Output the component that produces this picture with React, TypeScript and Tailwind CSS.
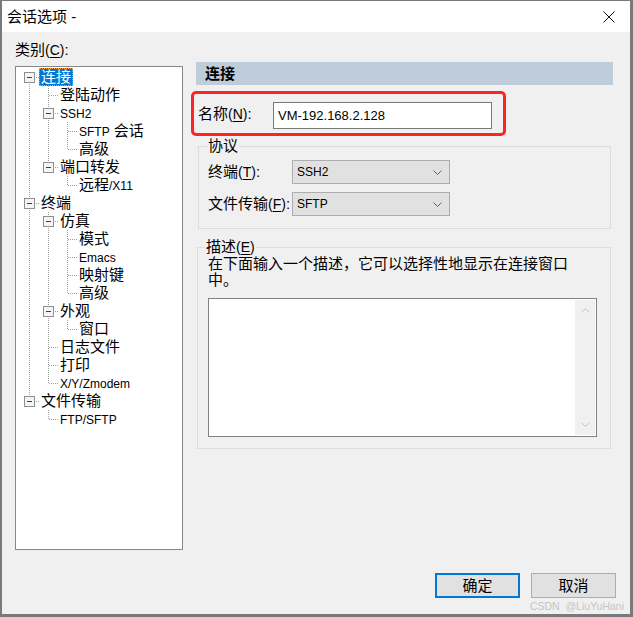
import React from 'react'

type TreeNode = {
  label: React.ReactNode
  selected?: boolean
  children?: TreeNode[]
}

type Row = {
  node: TreeNode
  level: number
  cont: boolean[]
  isLast: boolean
  isFirstRoot: boolean
}

// latin runs are smaller than the CJK text in this dialog
const L = (s: string) => <span className="text-[12px]">{s}</span>

const tree: TreeNode[] = [
  {
    label: '连接',
    selected: true,
    children: [
      { label: '登陆动作' },
      { label: L('SSH2'), children: [{ label: <>{L('SFTP')} 会话</> }, { label: '高级' }] },
      { label: '端口转发', children: [{ label: <>远程{L('/X11')}</> }] },
    ],
  },
  {
    label: '终端',
    children: [
      {
        label: '仿真',
        children: [{ label: '模式' }, { label: L('Emacs') }, { label: '映射键' }, { label: '高级' }],
      },
      { label: '外观', children: [{ label: '窗口' }] },
      { label: '日志文件' },
      { label: '打印' },
      { label: L('X/Y/Zmodem') },
    ],
  },
  { label: '文件传输', children: [{ label: L('FTP/SFTP') }] },
]

const flatten = (nodes: TreeNode[], level: number, cont: boolean[], out: Row[]) => {
  nodes.forEach((node, i) => {
    const isLast = i === nodes.length - 1
    out.push({ node, level, cont, isLast, isFirstRoot: level === 0 && i === 0 })
    if (node.children) flatten(node.children, level + 1, [...cont, !isLast], out)
  })
  return out
}

const rows = flatten(tree, 0, [], [])

const dotted = { stroke: '#a0a0a0', strokeDasharray: '1 1', strokeWidth: 1 }

function Cell({ row, own, on }: { row?: Row; own?: boolean; on?: boolean }) {
  if (!own) {
    return (
      <svg width="19" height="18" className="shrink-0">
        {on && <line x1="9.5" y1="0" x2="9.5" y2="18" style={dotted} />}
      </svg>
    )
  }
  const r = row!
  const y0 = r.isFirstRoot ? 10 : 0
  const y1 = r.isLast ? 9 : 18
  return (
    <svg width="19" height="18" className="shrink-0">
      {y1 > y0 && <line x1="9.5" y1={y0} x2="9.5" y2={y1} style={dotted} />}
      <line x1="10" y1="9.5" x2="19" y2="9.5" style={dotted} />
      {r.node.children && (
        <>
          <rect x="4.5" y="4.5" width="10" height="10" fill="#f4f4f4" stroke="#8e8f8f" />
          <line x1="7" y1="9.5" x2="12" y2="9.5" stroke="#1e3d8f" strokeWidth="1" />
        </>
      )}
    </svg>
  )
}

function Tree() {
  return (
    <div className="mt-[7px] w-[168px] h-[484px] border border-[#828790] bg-white pt-[1px] pl-[4px]">
      {rows.map((row, i) => (
        <div key={i} className="flex h-[18px] items-center">
          {row.cont.map((c, k) => (
            <Cell key={k} on={c} />
          ))}
          <Cell row={row} own />
          <span
            className={`px-[2px] h-[18px] leading-[18px] whitespace-nowrap ${
              row.node.selected
                ? 'bg-[#0078d7] text-white outline-1 outline-dotted outline-[#ff9a3c] -outline-offset-1'
                : 'text-black'
            }`}
          >
            {row.node.label}
          </span>
        </div>
      ))}
    </div>
  )
}

const Key = ({ k }: { k: string }) => (
  <span className="text-[14px]">
    (<span className="underline underline-offset-2">{k}</span>)
  </span>
)

function Select({ value }: { value: string }) {
  return (
    <div className="w-[158px] h-[24px] border border-[#adadad] bg-[#e1e1e1] flex items-center justify-between pl-[4px] pr-[7px]">
      <span className="text-[12px] leading-[22px]">{value}</span>
      <svg width="9" height="5">
        <polyline points="0.5,0.5 4.5,4.5 8.5,0.5" fill="none" stroke="#606060" strokeWidth="1" />
      </svg>
    </div>
  )
}

export default function App() {
  return (
    <div className="w-[633px] h-[617px] flex flex-col border-t border-l-2 border-r-[3px] border-b-[3px] border-[#7a7a7a] bg-[#f0f0f0] text-black text-[15px] font-['Liberation_Sans','Noto_Sans_CJK_SC',sans-serif] relative overflow-hidden">
      {/* title bar */}
      <div className="h-[31px] shrink-0 bg-white flex items-center justify-between pl-[5px] pr-[15px]">
        <span className="leading-[20px]">会话选项 -</span>
        <svg width="12" height="12" viewBox="0 0 12 12">
          <path d="M0.5 0.5 L11.5 11.5 M11.5 0.5 L0.5 11.5" stroke="#111" strokeWidth="1" />
        </svg>
      </div>

      <div className="flex-1 flex flex-col">
        <div className="flex">
          {/* category tree */}
          <div className="pl-[13px] pt-[9px] w-[181px] shrink-0">
            <div className="leading-[18px]">
              类别<Key k="C" />:
            </div>
            <Tree />
          </div>

          {/* settings */}
          <div className="pt-[30px] flex flex-col">
            <div className="ml-[13px] w-[417px] h-[23px] bg-[#bfcddb] pl-[9px] font-bold leading-[23px]">连接</div>

            <div className="ml-[8px] mt-[6px] w-[315px] h-[45px] border-[3px] border-[#ff2424] rounded-[5px] flex items-center pl-[4px] pt-[3px]">
              <span className="w-[75px] leading-[18px] -mt-[3px]">
                名称<Key k="N" />:
              </span>
              <div className="w-[219px] h-[27px] border border-[#7a7a7a] bg-white pl-[4px] text-[13px] leading-[25px]">
                VM-192.168.2.128
              </div>
            </div>

            <fieldset className="ml-[15px] mt-[1px] w-[413px] border border-[#dcdcdc] pl-[9px] pb-[12px]">
              <legend className="ml-[-1px] px-[1px] leading-[18px]">协议</legend>
              <div className="mt-[5px] flex items-center">
                <span className="w-[84px] leading-[18px] whitespace-nowrap">
                  终端<Key k="T" />:
                </span>
                <Select value="SSH2" />
              </div>
              <div className="mt-[8px] flex items-center">
                <span className="w-[84px] leading-[18px] whitespace-nowrap">
                  文件传输<Key k="F" />:
                </span>
                <Select value="SFTP" />
              </div>
            </fieldset>

            <fieldset className="ml-[14px] mt-[9px] w-[414px] border border-[#dcdcdc] pl-[10px] pb-[11px]">
              <legend className="ml-[-3px] px-[1px] leading-[18px]">
                描述<Key k="E" />
              </legend>
              <p className="w-[372px] leading-[16px]">在下面输入一个描述，它可以选择性地显示在连接窗口中。</p>
              <div className="mt-[10px] w-[389px] h-[139px] border border-[#828282] bg-white flex justify-end p-[1px]">
                <div className="w-[20px] bg-[#f0f0f0] flex flex-col items-center justify-between py-[8px]">
                  <svg width="9" height="5">
                    <polyline points="0.5,4.5 4.5,0.5 8.5,4.5" fill="none" stroke="#c2c2c2" strokeWidth="1" />
                  </svg>
                  <svg width="9" height="5">
                    <polyline points="0.5,0.5 4.5,4.5 8.5,0.5" fill="none" stroke="#c2c2c2" strokeWidth="1" />
                  </svg>
                </div>
              </div>
            </fieldset>
          </div>
        </div>

        {/* buttons */}
        <div className="mt-auto flex justify-end gap-[11px] pr-[14px] pb-[16px]">
          <button className="w-[85px] h-[25px] border-2 border-[#0078d7] bg-[#e1e1e1] leading-[21px]">确定</button>
          <button className="w-[85px] h-[25px] border border-[#adadad] bg-[#e1e1e1] leading-[23px]">取消</button>
        </div>
      </div>

      <span className="absolute right-[6px] bottom-[2px] text-[10.5px] leading-[12px] text-[#c4c4c4] whitespace-pre">
        CSDN  @LiuYuHani
      </span>
    </div>
  )
}
